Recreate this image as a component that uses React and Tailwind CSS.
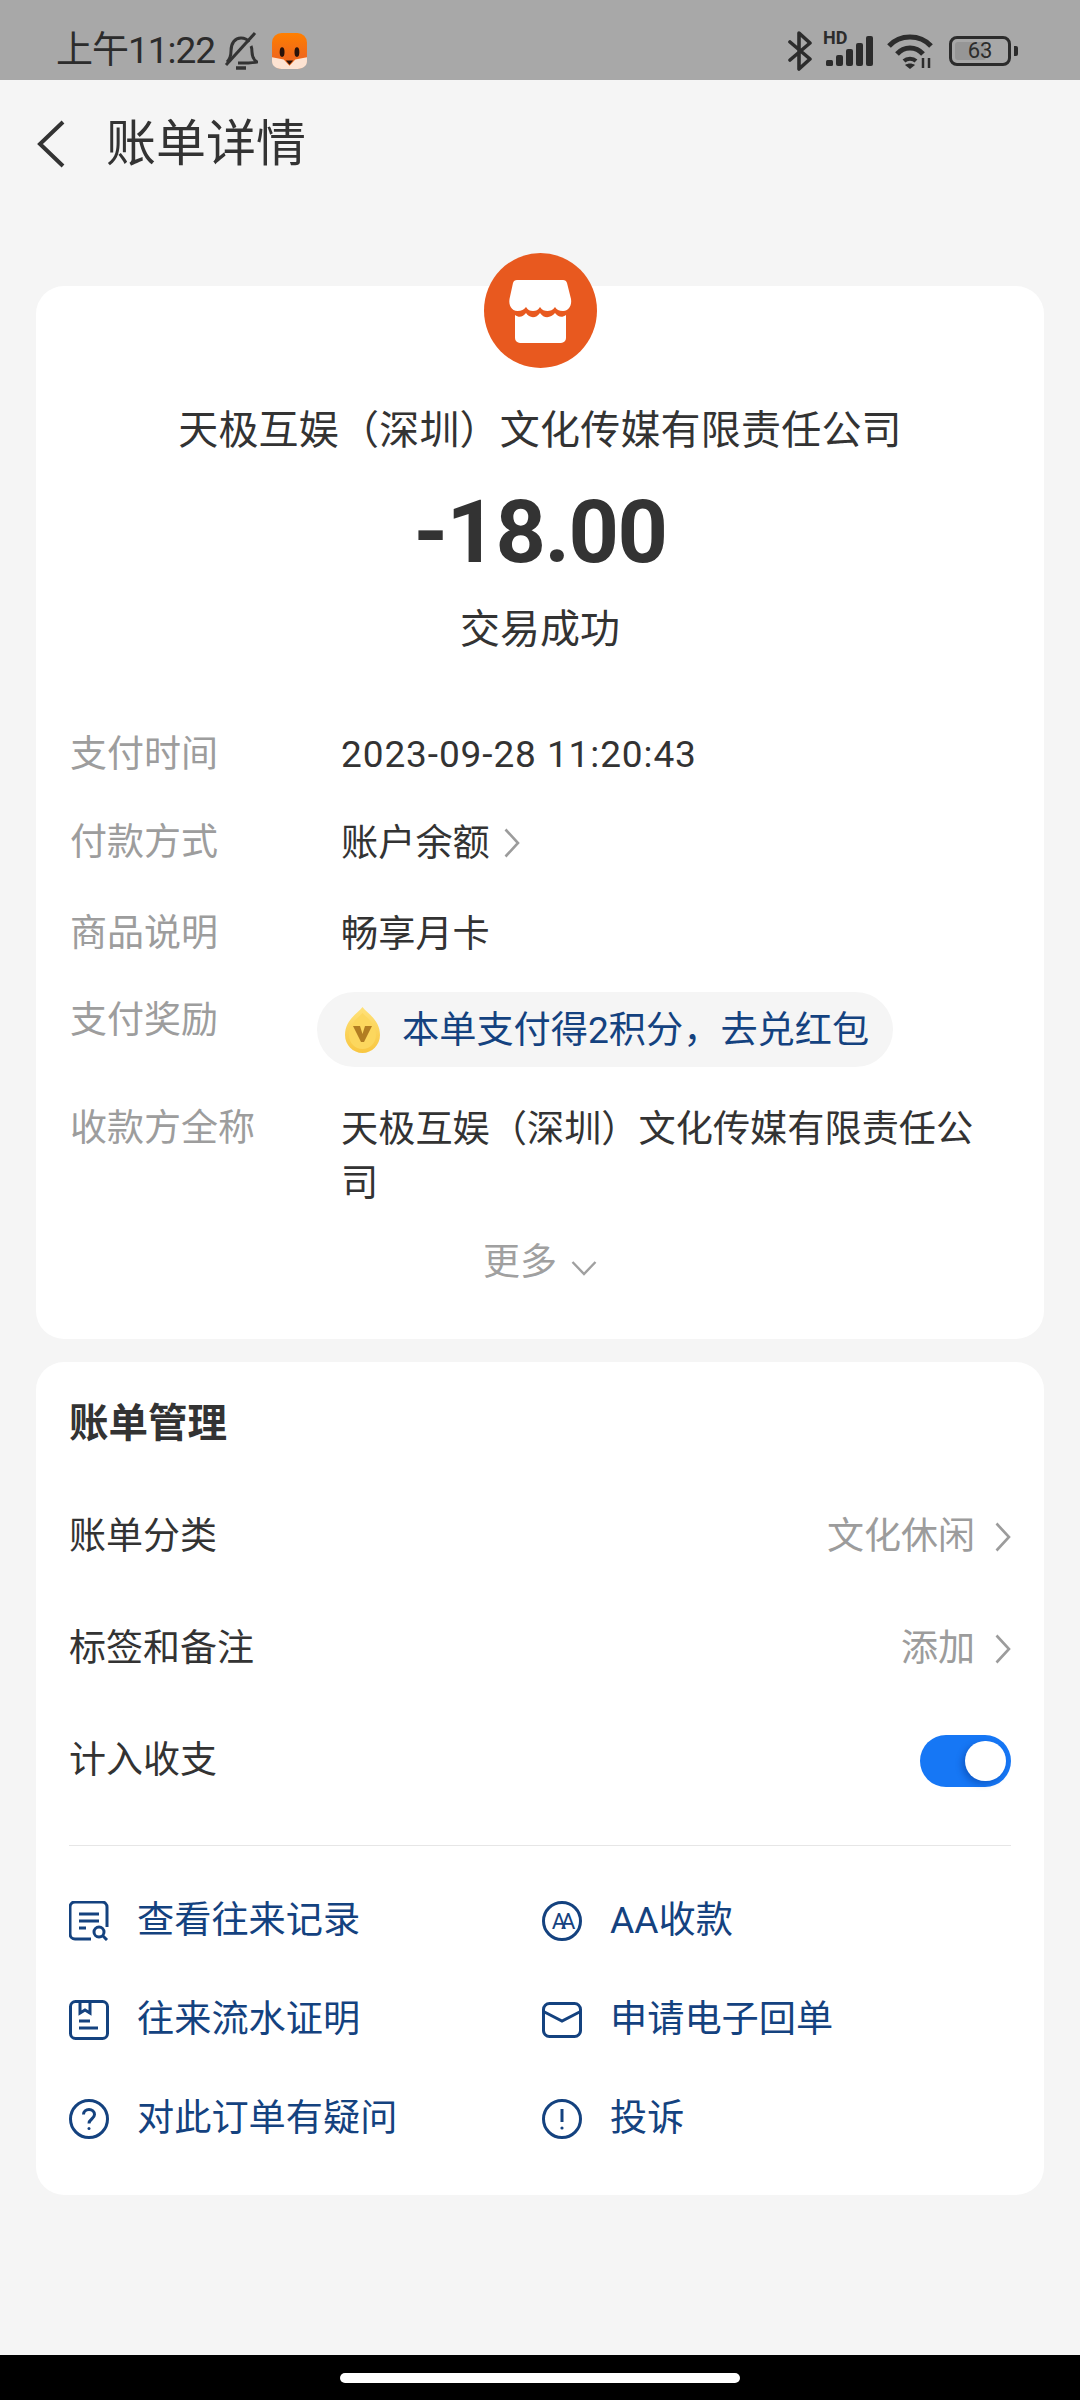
import React from 'react';

const navy = '#14427f';

const Chevron = () => (
  <svg width="16" height="30" viewBox="0 0 16 30" fill="none" className="shrink-0">
    <path d="M1.5 1.5 14 15 1.5 28.5" stroke="#9c9c9c" strokeWidth="2.6" />
  </svg>
);

const StatusBar = () => (
  <div className="flex h-20 shrink-0 items-center bg-[#a8a8a8] pl-[56px] pr-[62px] pt-[22px] text-[#2c2c2c]">
    <span className="text-[37px] leading-[58px] tracking-[-1px]">上午11:22</span>
    <svg width="34" height="40" viewBox="0 0 34 40" fill="none" className="ml-[9px]" stroke="#333" strokeWidth="3">
      <path d="M3 31c3-3 4-6 4-11 0-8 4-13 10-13 3 0 6 1 8 4M27 15c1 2 1 4 1 6 0 5 2 8 5 10-6 1-13 1-19 1" />
      <path d="M2 34 31 2" />
      <path d="M12 37h10" strokeWidth="3.5" />
    </svg>
    <svg width="35" height="36" viewBox="0 0 33 34" className="ml-[14px]">
      <defs>
        <linearGradient id="fox" x1="0" y1="0" x2="0" y2="1">
          <stop offset="0" stopColor="#ff7f00" />
          <stop offset="0.65" stopColor="#f0681a" />
        </linearGradient>
      </defs>
      <rect width="33" height="34" rx="9" fill="url(#fox)" />
      <path d="M0 23 11 25 16.5 31 22 25 33 23V27C33 31 29 34 24 34H9C4 34 0 31 0 27Z" fill="#fde3d2" />
      <ellipse cx="9.5" cy="18" rx="2.3" ry="4.6" fill="#2a120a" />
      <ellipse cx="23.5" cy="18" rx="2.3" ry="4.6" fill="#2a120a" />
      <path d="M13 26h7l-3.5 4Z" fill="#2a120a" />
    </svg>
    <div className="ml-auto flex items-center">
      <svg width="24" height="40" viewBox="0 0 24 40" fill="none" stroke="#2c2c2c" strokeWidth="3.6" strokeLinejoin="round" strokeLinecap="round">
        <path d="M2 11 22 28 11 38V2L22 12 2 29" />
      </svg>
      <div className="relative ml-[12px] h-[32px] w-[50px]">
        <span className="absolute left-[-1px] top-[-6px] text-[18px] font-bold leading-[18px] text-[#2c2c2c]">HD</span>
        <svg width="50" height="32" viewBox="0 0 50 32" className="absolute left-0 top-0" fill="#2c2c2c">
          <rect x="2" y="25" width="7" height="6" rx="1.5" />
          <rect x="12" y="20" width="7" height="11" rx="2" />
          <rect x="22" y="14" width="7" height="17" rx="2" />
          <rect x="32" y="8" width="7" height="23" rx="2" />
          <rect x="42" y="1" width="7" height="30" rx="2" />
        </svg>
      </div>
      <svg width="46" height="36" viewBox="0 0 46 36" fill="none" stroke="#2c2c2c" strokeWidth="5" className="ml-[13px]">
        <path d="M2 13C13 1 33 1 44 13" />
        <path d="M10 21C17 13 29 13 36 21" />
        <path d="M17 28C20 25 26 25 29 28" strokeWidth="4" />
        <path d="m23 36-5-4c3-2 7-2 10 0Z" fill="#2c2c2c" stroke="none" />
        <path d="M36 25v10M42 25v10" strokeWidth="2.5" />
      </svg>
      <div className="relative ml-[16px] flex h-[30px] w-[62px] items-center justify-center rounded-[8px] border-[3px] border-[#2c2c2c]">
        <div className="absolute bottom-[3px] left-[3px] top-[3px] w-[31px] rounded-[3px] bg-[#969696]" />
        <span className="relative text-[22px] leading-none text-[#2c2c2c]">63</span>
      </div>
      <div className="ml-[3px] h-[10px] w-[4px] rounded-r-[2px] bg-[#2c2c2c]" />
    </div>
  </div>
);

const Header = () => (
  <div className="flex h-[126px] shrink-0 items-center pl-[37px] pt-[1px]">
    <svg width="28" height="48" viewBox="0 0 28 48" fill="none">
      <path d="M26 2 3 24l23 22" stroke="#333" strokeWidth="4" />
    </svg>
    <h1 className="ml-[41px] text-[50px] font-normal leading-[60px] text-[#333]">账单详情</h1>
  </div>
);

const StoreBadge = () => (
  <svg width="113" height="115" viewBox="0 0 113 115" className="relative mx-auto mt-[-33px] block">
    <ellipse cx="56.5" cy="57.5" rx="56.5" ry="57.5" fill="#e8591f" />
    <path
      d="M33 27H79C81 27 82.500 28 83 30L87 46C88 52 85 58 79 58 75 58 72.500 56.500 71 54 69 57 66 58 63.500 58 60.500 58 58 57 56 54 54 57 52 58 49 58 46 58 44 57 42 54 40 56.500 37.500 58 33.500 58 27.500 58 24.500 52 25.500 46L29 30C29.500 28 31 27 33 27Z"
      fill="#fff"
    />
    <path
      d="M31 62C35 65 39 64 42 60 45 65 52 66 56 60 60 66 67 65 71 60 74 64 78 65 82 62V85A5 5 0 0 1 77 90H36A5 5 0 0 1 31 85Z"
      fill="#fff"
    />
  </svg>
);

const Coin = () => (
  <svg width="37" height="46" viewBox="0 0 37 46" className="shrink-0">
    <defs>
      <linearGradient id="coin" x1="0" y1="0" x2="0" y2="1">
        <stop offset="0" stopColor="#ffe27a" />
        <stop offset="1" stopColor="#f8c640" />
      </linearGradient>
    </defs>
    <path d="M18.500 0C23 6 36 13 36 28 36 38 28 46 18.500 46 9 46 1 38 1 28 1 13 14 6 18.500 0Z" fill="url(#coin)" />
    <path d="M18.500 6C23 11 32 17 32 28 32 36 26 42 18.500 42 11 42 5 36 5 28 5 17 14 11 18.500 6Z" fill="#fcd75e" />
    <path d="M9 19h7l2.500 8 2.500-8h7l-8 16h-3Z" fill="#b27d22" />
  </svg>
);

const DetailRow = ({ label, className, children }) => (
  <div className={`grid grid-cols-[271px_1fr] ${className}`}>
    <span className="text-[37px] leading-[54px] text-[#9d9d9d]">{label}</span>
    {children}
  </div>
);

const BillCard = () => (
  <section className="mx-[36px] h-[1053px] shrink-0 rounded-[28px] bg-white pl-[34px] pr-[35px]">
    <div className="ml-[-34px] mr-[-35px] text-center">
      <StoreBadge />
      <p className="mt-[35px] text-[40px] leading-[56px] tracking-[0.2px] text-[#333]">天极互娱（深圳）文化传媒有限责任公司</p>
      <p className="mt-[23px] text-[88px] font-bold leading-[100px] tracking-[-1.500px] text-[#333]">-18.00</p>
      <p className="mt-[23px] text-[40px] leading-[50px] text-[#333]">交易成功</p>
    </div>
    <DetailRow label="支付时间" className="mt-[73px]">
      <span className="text-[37px] leading-[54px] tracking-[0.9px] text-[#333]">2023-09-28 11:20:43</span>
    </DetailRow>
    <DetailRow label="付款方式" className="mt-[34px]">
      <span className="flex items-center gap-[14px] text-[37.200px] leading-[54px] text-[#333]">
        账户余额
        <Chevron />
      </span>
    </DetailRow>
    <DetailRow label="商品说明" className="mt-[37px]">
      <span className="text-[37.200px] leading-[54px] text-[#333]">畅享月卡</span>
    </DetailRow>
    <DetailRow label="支付奖励" className="mt-[33px]">
      <div className="ml-[-24px] mt-[-2px] flex h-[75px] w-[576px] items-center rounded-full bg-[#f5f5f5] pl-[27px]">
        <Coin />
        <span className="ml-[21px] whitespace-nowrap text-[37.200px] leading-[54px] text-[#14427f]">本单支付得2积分，去兑红包</span>
      </div>
    </DetailRow>
    <DetailRow label="收款方全称" className="mt-[35px]">
      <span className="text-[37.200px] leading-[54px] text-[#333]">天极互娱（深圳）文化传媒有限责任公司</span>
    </DetailRow>
    <div className="ml-[-34px] mr-[-35px] mt-[26px] flex items-center justify-center gap-[14px]">
      <span className="text-[37px] leading-[54px] text-[#a0a0a0]">更多</span>
      <svg width="26" height="16" viewBox="0 0 26 16" fill="none" className="mt-[10px]">
        <path d="M1.500 2 13 14 24.500 2" stroke="#a0a0a0" strokeWidth="2.400" />
      </svg>
    </div>
  </section>
);

const ManageRow = ({ label, children }) => (
  <div className="flex h-[112px] items-center justify-between">
    <span className="text-[37px] text-[#333]">{label}</span>
    {children}
  </div>
);

const RowValue = ({ text }) => (
  <span className="flex items-center gap-[20px] text-[37px] text-[#9c9c9c]">
    {text}
    <Chevron />
  </span>
);

const iconProps = {
  width: 40,
  height: 40,
  viewBox: '0 0 40 40',
  fill: 'none',
  stroke: navy,
  strokeWidth: 3,
  className: 'shrink-0',
};

const RecordIcon = () => (
  <svg {...iconProps}>
    <path d="M22 38H6a5 5 0 0 1-5-5V6a5 5 0 0 1 5-5h27a5 5 0 0 1 5 5v20" />
    <path d="M10 13h20M10 20h20M10 27h7" />
    <circle cx="30" cy="31" r="5" />
    <path d="m34 35 4 4" />
  </svg>
);

const ProofIcon = () => (
  <svg {...iconProps}>
    <rect x="1.500" y="1.500" width="37" height="37" rx="5" />
    <path d="M11 1v12l5-3 5 3V1M10 21h11M10 28h19" />
  </svg>
);

const QuestionIcon = () => (
  <svg {...iconProps}>
    <circle cx="20" cy="20" r="18.500" />
    <path d="M14.500 15.500c0-3 2.500-5 5.500-5s5.500 2 5.500 5c0 4.500-5.500 4.500-5.500 9" />
    <circle cx="20" cy="29.500" r="1.500" fill={navy} stroke="none" />
  </svg>
);

const AaIcon = () => (
  <svg {...iconProps}>
    <circle cx="20" cy="20" r="18.500" />
    <text x="19" y="28" textAnchor="middle" fontSize="22" letterSpacing="-5" fill={navy} stroke="none">AA</text>
  </svg>
);

const MailIcon = () => (
  <svg {...iconProps}>
    <rect x="1.500" y="3.500" width="37" height="33" rx="6" />
    <path d="M1.500 11.500 20 21 38.500 11.500" />
  </svg>
);

const AlertIcon = () => (
  <svg {...iconProps}>
    <circle cx="20" cy="20" r="18.500" />
    <path d="M20 10v13" />
    <circle cx="20" cy="29" r="1.600" fill={navy} stroke="none" />
  </svg>
);

const links = [
  { key: 'record', icon: <RecordIcon />, text: '查看往来记录' },
  { key: 'aa', icon: <AaIcon />, text: 'AA收款' },
  { key: 'proof', icon: <ProofIcon />, text: '往来流水证明' },
  { key: 'mail', icon: <MailIcon />, text: '申请电子回单' },
  { key: 'question', icon: <QuestionIcon />, text: '对此订单有疑问' },
  { key: 'alert', icon: <AlertIcon />, text: '投诉' },
];

const ManageCard = () => (
  <section className="mx-[36px] mt-[23px] shrink-0 rounded-[28px] bg-white px-[33px] pb-[27px] pt-[35px]">
    <h2 className="text-[39.500px] font-bold leading-[54px] text-[#333]">账单管理</h2>
    <div className="mt-[30px]">
      <ManageRow label="账单分类">
        <RowValue text="文化休闲" />
      </ManageRow>
      <ManageRow label="标签和备注">
        <RowValue text="添加" />
      </ManageRow>
      <ManageRow label="计入收支">
        <div className="flex h-[52px] w-[91px] items-center justify-end rounded-full bg-[#1677f5] pr-[5px]">
          <div className="h-[40px] w-[41px] rounded-full bg-white shadow-[-3px_3px_6px_rgba(0,40,120,0.35)]" />
        </div>
      </ManageRow>
    </div>
    <div className="mt-[28px] h-px bg-[#e6e6e6]" />
    <div className="mt-[25px] grid grid-cols-[473px_1fr]">
      {links.map((link) => (
        <div key={link.key} className="flex h-[99px] items-center gap-[28px]">
          {link.icon}
          <span className="text-[37.200px] text-[#14427f]">{link.text}</span>
        </div>
      ))}
    </div>
  </section>
);

export default function App() {
  return (
    <div
      lang="zh-CN"
      className="flex h-[2400px] w-[1080px] flex-col overflow-hidden bg-[#f5f5f5] font-['Roboto','Noto_Sans_CJK_SC',sans-serif]"
    >
      <StatusBar />
      <div className="h-[80px] shrink-0">
        <Header />
      </div>
      <div className="h-[126px] shrink-0" />
      <BillCard />
      <ManageCard />
      <div className="mt-auto flex h-[45px] shrink-0 items-center justify-center bg-black">
        <div className="h-[10px] w-[400px] rounded-full bg-white" />
      </div>
    </div>
  );
}
